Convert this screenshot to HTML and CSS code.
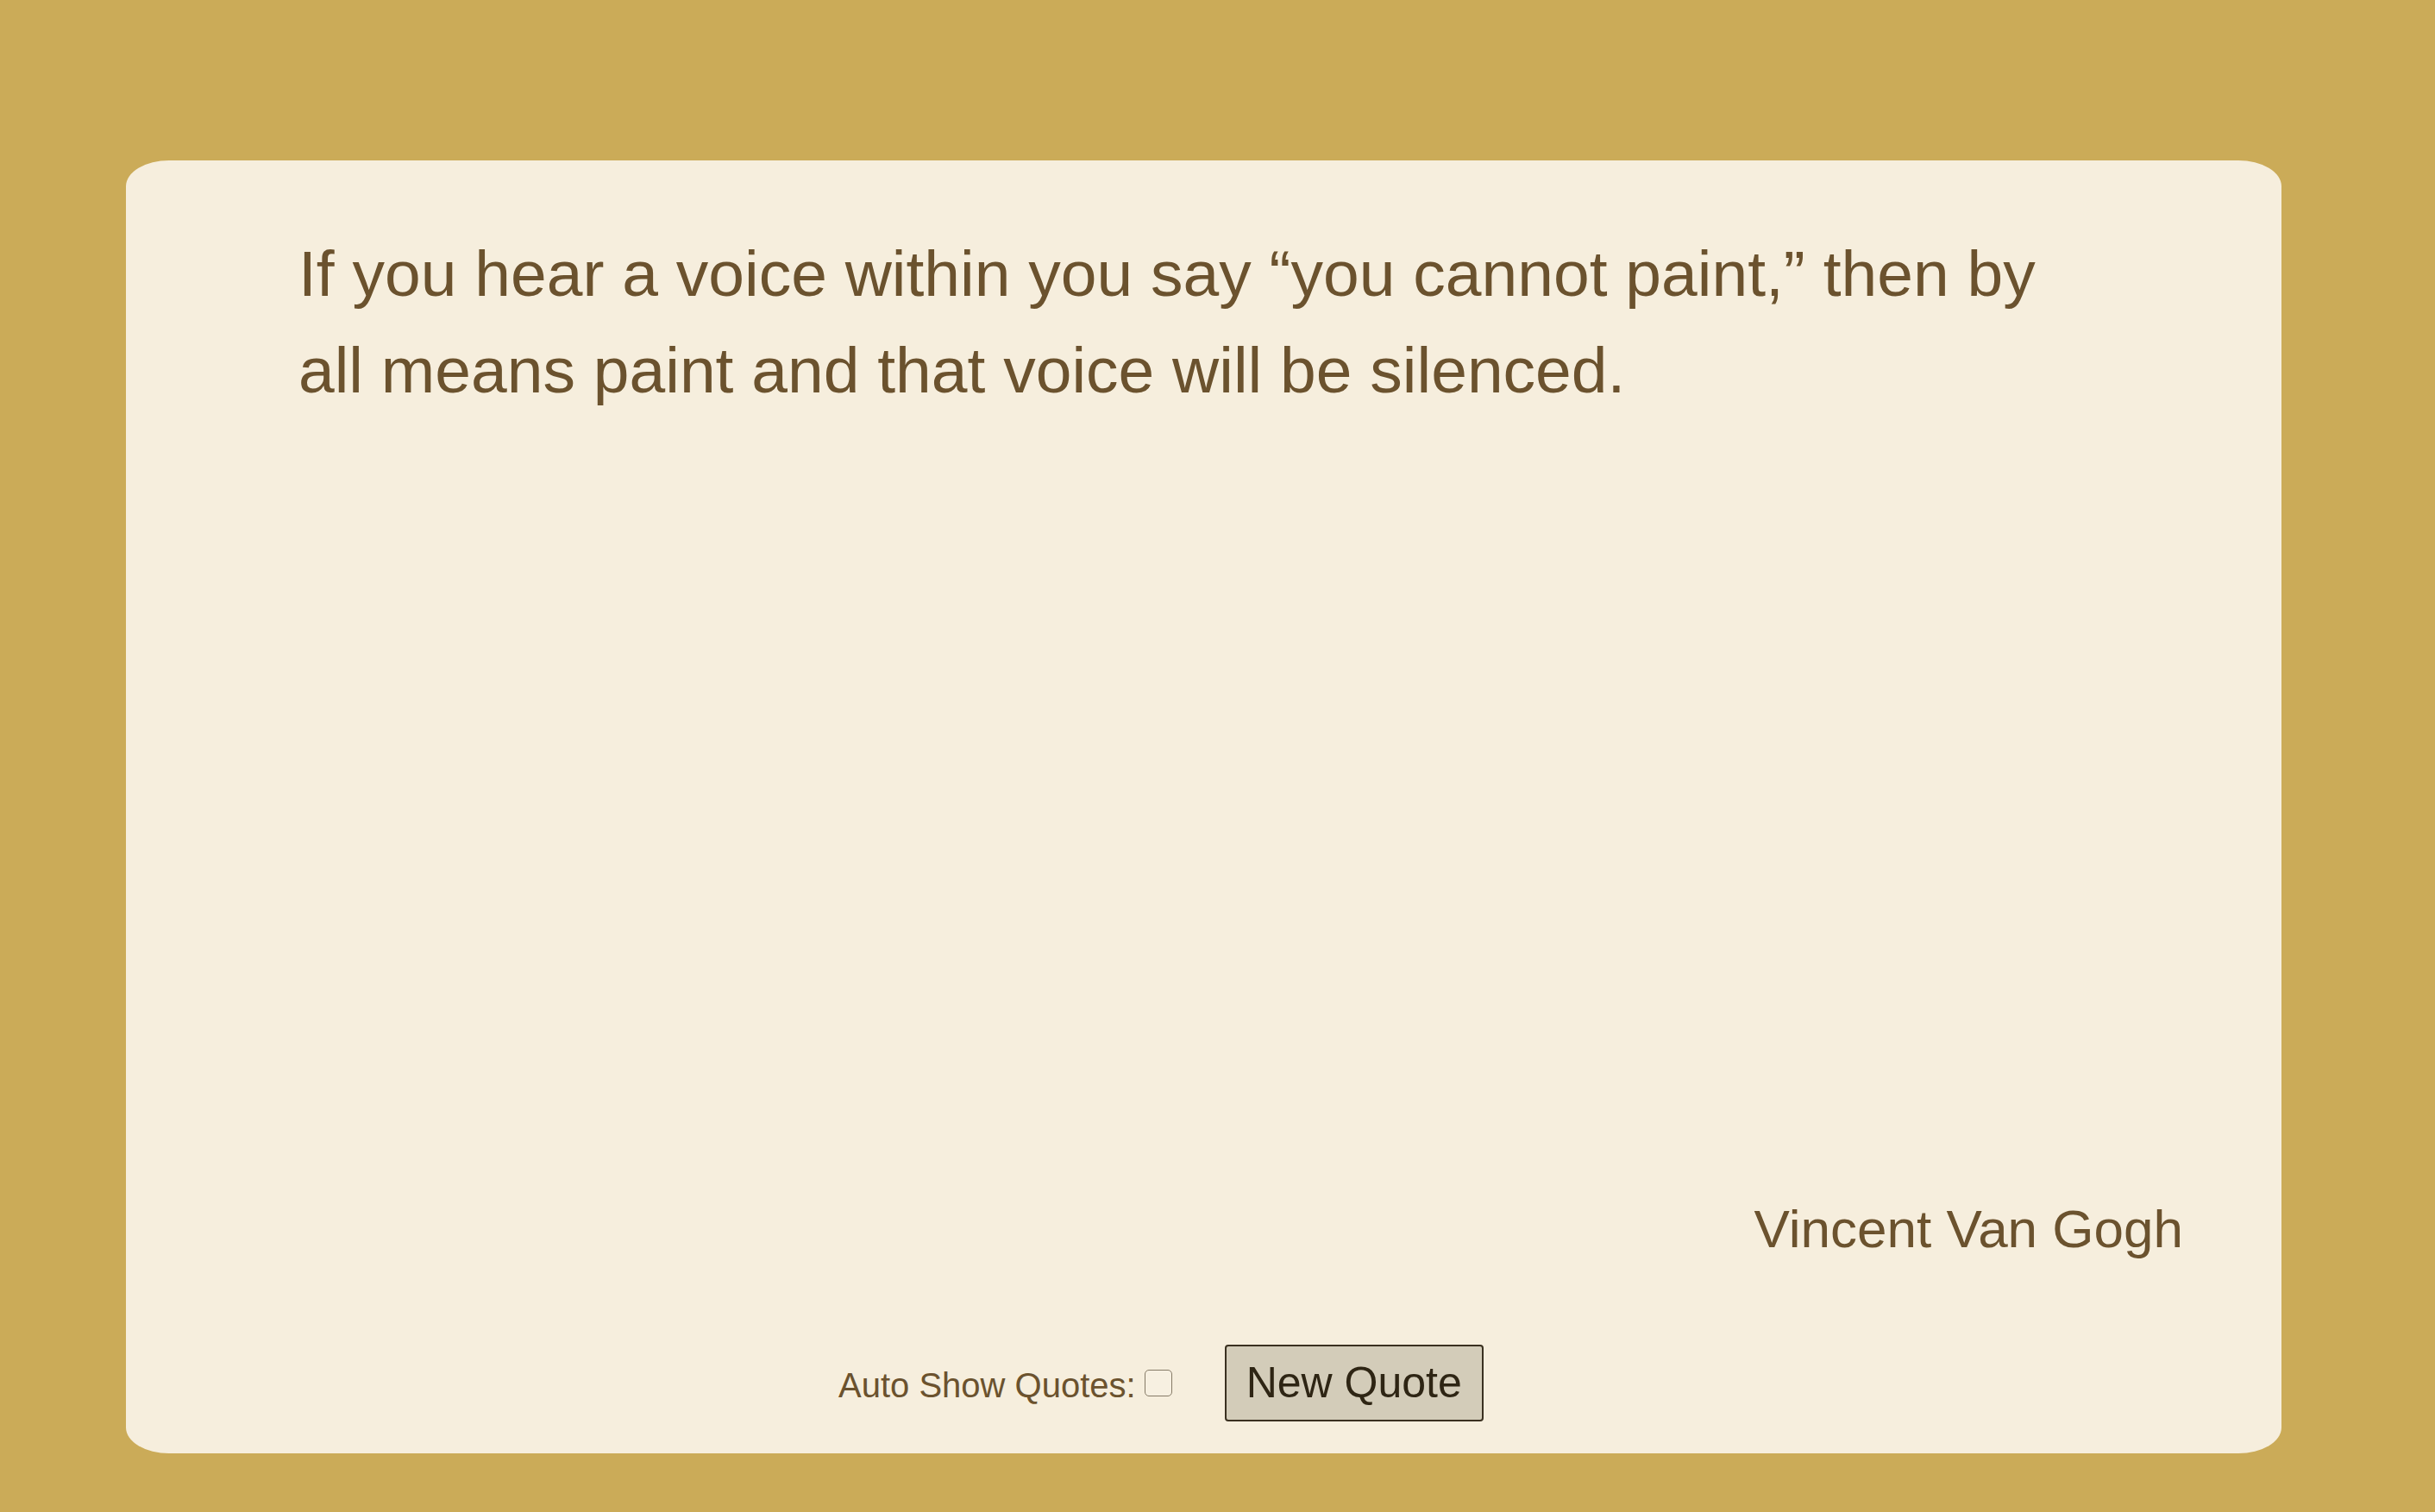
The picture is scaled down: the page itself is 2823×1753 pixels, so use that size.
FILE: index.html
```html
<!DOCTYPE html>
<html lang="en">
<head>
<meta charset="utf-8">
<title>Quote</title>
<link rel="stylesheet" href="styles.css">
</head>
<body>
<main class="card">
  <p class="quote">If you hear a voice within you say “you cannot paint,” then by all means paint and that voice will be silenced.</p>
  <p class="author">Vincent Van Gogh</p>
  <div class="controls">
    <label class="auto-label" for="auto">Auto Show Quotes:</label>
    <input class="auto-check" type="checkbox" id="auto">
    <button class="new-quote" type="button">New Quote</button>
  </div>
</main>
</body>
</html>
```

FILE: styles.css
```css
html, body {
  margin: 0;
  padding: 0;
}
body {
  background: #cbab58;
  min-height: 100vh;
  font-family: "Liberation Sans", Arial, sans-serif;
  color: #6b522e;
  padding-top: 186px;
  padding-left: 146px;
  box-sizing: border-box;
}
.card {
  width: 2499px;
  height: 1499px;
  box-sizing: border-box;
  background: #f6eedd;
  border-radius: 2% / 2%;
  padding: 75px 114px 37px 200px;
  display: flex;
  flex-direction: column;
}
.quote {
  margin: 0;
  max-width: 2080px;
  font-size: 75px;
  line-height: 112px;
}
.author {
  margin: auto 0 99px 0;
  text-align: right;
  font-size: 62px;
  line-height: 71px;
}
.controls {
  display: flex;
  align-items: center;
  margin-left: 626px;
}
.auto-label {
  font-size: 40px;
  line-height: 46px;
  position: relative;
  top: 2px;
}
.auto-check {
  appearance: none;
  -webkit-appearance: none;
  width: 32px;
  height: 31px;
  margin: 0 0 0 10px;
  border: 1.5px solid #857a66;
  border-radius: 5px;
  background: #f7f0e1;
  box-sizing: border-box;
}
.new-quote {
  margin-left: 61px;
  font-family: "Liberation Sans", Arial, sans-serif;
  font-size: 50px;
  line-height: 57px;
  white-space: nowrap;
  color: #2e2514;
  background: #d3ccb9;
  border: 2px solid #3a3020;
  border-radius: 4px;
  padding: 14px 23px;
  height: 89px;
  box-sizing: border-box;
}
```
